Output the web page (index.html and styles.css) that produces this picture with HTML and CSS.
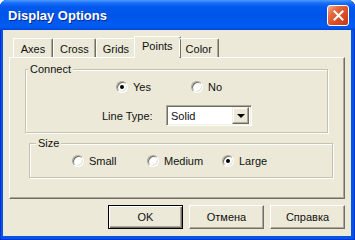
FILE: index.html
```html
<!DOCTYPE html>
<html lang="en">
<head>
    <meta charset="UTF-8">
    <meta name="viewport" content="width=device-width, initial-scale=1.0">
    <title>Display Options</title>
    <link rel="stylesheet" href="styles.css">
</head>
<body>

<div class="window">

    <!-- Title bar -->
    <div class="titlebar">
        <span class="title">Display Options</span>
        <button class="close" aria-label="Close">
            <svg width="11" height="11" viewBox="0 0 11 11">
                <path d="M1.5 1.5 L9.5 9.5 M9.5 1.5 L1.5 9.5" stroke="#fff" stroke-width="2" stroke-linecap="square"/>
            </svg>
        </button>
    </div>

    <div class="client">

        <!-- Tabs -->
        <div class="tabs">
            <div class="tab">Axes</div>
            <div class="tab">Cross</div>
            <div class="tab">Grids</div>
            <div class="tab active">Points</div>
            <div class="tab">Color</div>
        </div>

        <div class="panel">

            <!-- Connect group -->
            <fieldset class="group connect">
                <legend>Connect</legend>
                <div class="radio-row">
                    <label class="radio checked"><span class="circle"></span>Yes</label>
                    <label class="radio"><span class="circle"></span>No</label>
                </div>
                <div class="line-row">
                    <span class="line-label">Line Type:</span>
                    <div class="select">
                        <span class="value">Solid</span>
                        <span class="drop"><span class="tri"></span></span>
                    </div>
                </div>
            </fieldset>

            <!-- Size group -->
            <fieldset class="group size">
                <legend>Size</legend>
                <div class="radio-row">
                    <label class="radio"><span class="circle"></span>Small</label>
                    <label class="radio"><span class="circle"></span>Medium</label>
                    <label class="radio checked"><span class="circle"></span>Large</label>
                </div>
            </fieldset>

        </div>

        <!-- Dialog buttons -->
        <div class="buttons">
            <button class="btn default">OK</button>
            <button class="btn">Отмена</button>
            <button class="btn">Справка</button>
        </div>

    </div>
</div>

</body>
</html>
```

FILE: styles.css
```css
* {
    box-sizing: border-box;
}

body {
    margin: 0;
    background: #fff;
    font-family: Tahoma, 'Liberation Sans', sans-serif;
    font-size: 11px;
    color: #111;
}

.window {
    width: 355px;
    height: 240px;
    display: flex;
    flex-direction: column;
    background: #0055e5;
    border-radius: 7px 7px 0 0;
    overflow: hidden;
    box-shadow: inset 1px 0 0 #0831d9, inset -1px 0 0 #0831d9, inset 0 -1px 0 #0831d9;
}

.titlebar {
    height: 30px;
    flex: none;
    display: flex;
    align-items: center;
    justify-content: space-between;
    padding: 1px 6px 0 8px;
    background: linear-gradient(180deg, #4a9bff 0, #1a6ef5 3px, #0058ee 7px, #0054e8 50%, #005cf3 85%, #0058ec 93%, #0042d0 100%);
}

.title {
    font-family: 'Liberation Sans', sans-serif;
    font-weight: bold;
    font-size: 13px;
    color: #fff;
    text-shadow: 1px 1px 0 #0a2a90;
}

.close {
    width: 22px;
    height: 21px;
    padding: 0;
    border: 1px solid #fff;
    border-radius: 3px;
    background: linear-gradient(135deg, #f4b09a 0%, #e4693f 30%, #d84a22 65%, #c43b16 100%);
    display: flex;
    align-items: center;
    justify-content: center;
}

.client {
    flex: 1;
    margin: 0 4px 4px 3px;
    background: #ece9d8;
    padding: 6px 6px 0 6px;
    display: flex;
    flex-direction: column;
}

/* tabs */

.tabs {
    height: 21px;
    flex: none;
    display: flex;
    align-items: flex-end;
    padding-left: 4px;
    position: relative;
    z-index: 1;
}

.tab {
    height: 19px;
    line-height: 16px;
    padding: 2px 6px 0;
    min-width: 40px;
    text-align: center;
    border: 1px solid;
    border-color: #fff #716f64 transparent #fff;
    border-bottom: none;
    border-radius: 2px 2px 0 0;
    box-shadow: inset -1px 0 0 #aca899;
}

.tab.active {
    height: 22px;
    margin: 0 -2px -1px;
    padding: 1px 7px 0;
    background: #ece9d8;
}

.panel {
    flex: 1;
    border: 1px solid;
    border-color: #fff #716f64 #716f64 #fff;
    box-shadow: inset -1px -1px 0 #aca899;
    padding-top: 5px;
}

/* group boxes */

.group {
    margin: 0;
    padding: 0;
    min-width: 0;
    border: 1px solid #c5c2b2;
    box-shadow: inset 1px 1px 0 #fff, 1px 1px 0 #fff;
}

.group legend {
    line-height: 13px;
    padding: 0 2px;
    background: #ece9d8;
}

.connect {
    width: 303px;
    margin-left: 15px;
    padding-bottom: 6px;
}

.connect legend {
    margin-left: 2px;
}

.size {
    width: 304px;
    margin: 4px 0 0 19px;
    padding-bottom: 10px;
}

.size legend {
    margin-left: 6px;
}

.radio-row {
    display: flex;
    margin-top: 4px;
}

.connect .radio-row {
    padding-left: 90px;
}

.size .radio-row {
    padding-left: 42px;
}

.radio {
    display: flex;
    align-items: center;
    gap: 5px;
    min-width: 75px;
    height: 13px;
}

.circle {
    width: 12px;
    height: 12px;
    border-radius: 50%;
    background: #fff;
    border: 1px solid;
    border-color: #aca899 #fff #fff #aca899;
    box-shadow: inset 1px 1px 0 #716f64, inset -1px -1px 0 #e4e1d2;
    display: flex;
    align-items: center;
    justify-content: center;
}

.radio.checked .circle::after {
    content: '';
    width: 4px;
    height: 4px;
    border-radius: 50%;
    background: #000;
}

.line-row {
    display: flex;
    align-items: center;
    margin-top: 12px;
    padding-left: 76px;
}

.line-label {
    width: 64px;
}

.select {
    width: 86px;
    height: 21px;
    display: flex;
    align-items: center;
    background: #fff;
    border: 1px solid;
    border-color: #aca899 #fff #fff #aca899;
    box-shadow: inset 1px 1px 0 #716f64, inset -1px -1px 0 #f1efe2;
    padding: 2px 2px 2px 4px;
}

.select .value {
    flex: 1;
}

.drop {
    width: 17px;
    height: 17px;
    background: #ece9d8;
    border: 1px solid;
    border-color: #f1efe2 #716f64 #716f64 #f1efe2;
    box-shadow: inset -1px -1px 0 #aca899, inset 1px 1px 0 #fff;
    display: flex;
    align-items: center;
    justify-content: center;
}

.tri {
    width: 0;
    height: 0;
    border-left: 4px solid transparent;
    border-right: 4px solid transparent;
    border-top: 4px solid #000;
}

/* buttons */

.buttons {
    flex: none;
    display: flex;
    justify-content: flex-end;
    gap: 6px;
    padding: 6px 0 7px;
}

.btn {
    width: 75px;
    height: 24px;
    padding: 0;
    font-family: Tahoma, 'Liberation Sans', sans-serif;
    font-size: 11px;
    color: #111;
    background: #ece9d8;
    border: 1px solid;
    border-color: #fff #716f64 #716f64 #fff;
    box-shadow: inset -1px -1px 0 #aca899;
}

.btn.default {
    border: 1px solid #000;
    box-shadow: inset 1px 1px 0 #fff, inset -1px -1px 0 #716f64, inset -2px -2px 0 #aca899;
}
```
